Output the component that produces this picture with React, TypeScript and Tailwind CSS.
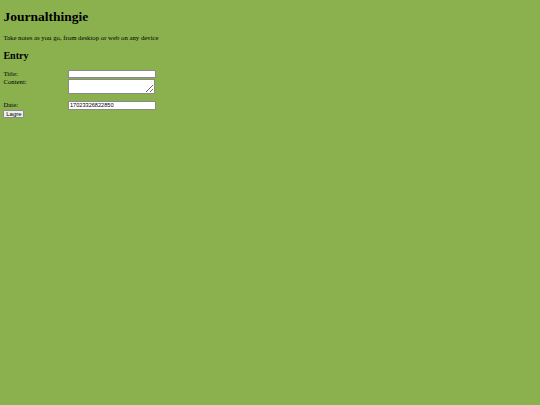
import React, { useState } from "react";

export default function App() {
  const [title, setTitle] = useState("");
  const [content, setContent] = useState("");
  const [date, setDate] = useState("17023326822850");

  return (
    <div className="min-h-screen bg-[#8bb14f] px-[3.4px] pt-[3.4px] text-black font-['Liberation_Serif',serif]">
      {/* Header */}
      <h1 className="mt-[5.7px] text-[13.5px] leading-[15.5px] font-bold">Journalthingie</h1>
      <p className="mt-[9px] text-[6.75px] leading-[7.8px]">
        Take notes as you go, from desktop or web on any device
      </p>

      <h2 className="mt-[8.4px] text-[10.1px] leading-[11.6px] font-bold">Entry</h2>

      {/* Entry form */}
      <form className="mt-[8.2px] flex flex-col text-[6.75px] leading-[7.8px]" onSubmit={(e) => e.preventDefault()}>
        <div className="flex items-center">
          <label className="w-[64.6px] shrink-0">Title:</label>
          <input
            value={title}
            onChange={(e) => setTitle(e.target.value)}
            className="h-[8.6px] w-[88px] bg-white border border-[#8a8a8a] px-[1px] text-[5.6px] font-['Liberation_Sans',sans-serif] outline-none"
          />
        </div>
        <div className="mt-[0.8px] flex items-start">
          <label className="w-[64.6px] shrink-0 -mt-[0.6px]">Content:</label>
          <textarea
            value={content}
            onChange={(e) => setContent(e.target.value)}
            className="h-[15px] w-[87px] bg-white border border-[#8a8a8a] px-[1px] text-[5.6px] font-['Liberation_Sans',sans-serif] outline-none resize"
          />
        </div>
        <div className="mt-[7px] flex items-center">
          <label className="w-[64.6px] shrink-0 -mt-[0.6px]">Date:</label>
          <input
            value={date}
            onChange={(e) => setDate(e.target.value)}
            className="h-[8.6px] w-[88px] bg-white border border-[#8a8a8a] px-[1px] text-[5.6px] font-['Liberation_Sans',sans-serif] outline-none"
          />
        </div>
        <div className="mt-[0.4px]">
          <button
            type="submit"
            className="h-[8px] w-[21px] rounded-[1px] bg-[#efefef] border border-[#8a8a8a] text-[6px] leading-none font-['Liberation_Sans',sans-serif]"
          >
            Lagre
          </button>
        </div>
      </form>
    </div>
  );
}
